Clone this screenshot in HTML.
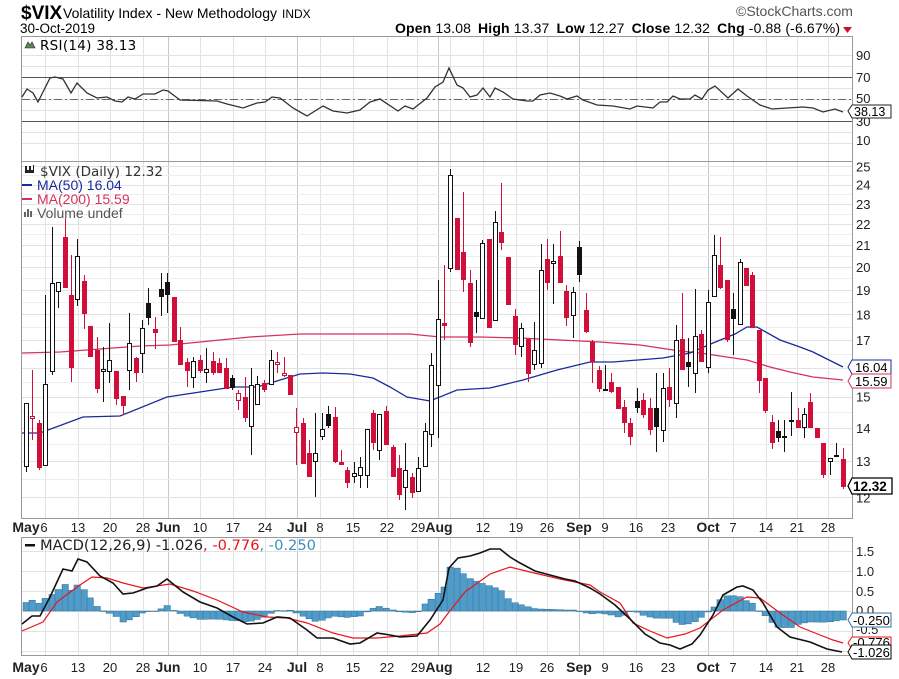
<!DOCTYPE html>
<html><head><meta charset="utf-8"><style>
html,body{margin:0;padding:0;background:#fff;width:899px;height:679px;overflow:hidden}
svg{display:block;font-family:"Liberation Sans",sans-serif}
</style></head><body>
<svg id="s" width="899" height="679" viewBox="0 0 899 679" xmlns="http://www.w3.org/2000/svg">
<g id="grid" stroke="#e2e2e2" stroke-width="1" shape-rendering="crispEdges"></g>
<!-- header -->
<text x="21" y="19" font-size="19" font-weight="bold">$VIX</text>
<text x="63" y="18" font-size="14">Volatility Index - New Methodology</text>
<text x="282" y="18" font-size="12">INDX</text>
<text x="20" y="33" font-size="13.5">30-Oct-2019</text>
<text x="736" y="16" font-size="14" fill="#555">©StockCharts.com</text>
<text x="395" y="33" font-size="14" textLength="445" lengthAdjust="spacing"><tspan font-weight="bold">Open</tspan> 13.08 <tspan font-weight="bold" dx="3">High</tspan> 13.37 <tspan font-weight="bold" dx="3">Low</tspan> 12.27 <tspan font-weight="bold" dx="3">Close</tspan> 12.32 <tspan font-weight="bold" dx="3">Chg</tspan> -0.88 (-6.67%)</text>
<polygon points="843,27 852,27 847.5,33" fill="#c8102e"/>
<!-- panel borders -->
<g fill="none" stroke="#999" stroke-width="1" shape-rendering="crispEdges">
<rect x="21.5" y="36.5" width="831" height="125"/>
<rect x="21.5" y="161.5" width="831" height="357"/>
<rect x="21.5" y="537.5" width="831" height="118"/>
</g>
<!-- RSI -->
<g shape-rendering="crispEdges" stroke-width="1">
<line x1="22" y1="77.5" x2="852" y2="77.5" stroke="#555"/>
<line x1="22" y1="121.5" x2="852" y2="121.5" stroke="#555"/>
<line x1="22" y1="99.5" x2="852" y2="99.5" stroke="#666" stroke-dasharray="8,3,2,3"/>
</g>
<polyline fill="none" stroke="#333" stroke-width="1.3" points="22,97 27,89 33,93 38,102 50,78 55,77 63,79 71,93 77,83 87,93 97,98 107,97 115,101 122,102 128,97 135,99 143,94 155,94 163,90 168,91 180,100 217,101 227,104 243,108 257,103 265,102 272,97 280,98 293,108 307,116 323,106 333,111 347,113 360,110 370,102 380,99 398,111 405,106 413,109 427,98 435,87 443,82 449,68 457,85 463,88 470,97 477,95 483,88 490,97 495,88 503,92 513,99 527,101 533,101 540,95 550,93 560,96 567,99 577,96 583,100 597,105 613,106 630,109 637,106 653,108 660,102 667,102 673,96 680,99 690,99 695,95 702,99 708,90 715,86 728,98 738,89 747,96 760,105 772,109 787,108 803,107 813,108 823,112 835,109 843,112"/>
<polygon points="25,48 28,42 30,45 32,42 35,48" fill="#5a8a5a" stroke="#222" stroke-width=".6"/>
<text x="40" y="50" font-size="13.5" font-family="DejaVu Sans,sans-serif" letter-spacing=".3">RSI(14) 38.13</text>
<g font-size="13" fill="#222">
<text x="856" y="60">90</text><text x="856" y="82">70</text><text x="856" y="103">50</text><text x="856" y="126">30</text><text x="856" y="145">10</text>
</g>
<path d="M848,111 L852,105 H891 V118 H852 Z" fill="#fff" stroke="#222"/>
<text x="854" y="116" font-size="12.5">38.13</text>
<!-- price -->
<polyline fill="none" stroke="#d4335a" stroke-width="1.3" points="22,353 60,352 100,349 140,346 170,345 200,342 250,337 300,334 360,334 410,334 440,337 480,337 520,338 560,340 600,342 640,345 680,351 700,353 720,356 747,360 770,367 790,372 813,377 843,380"/>
<polyline fill="none" stroke="#1a2a9a" stroke-width="1.3" points="22,433 40,433 83,417 120,416 167,397 200,392 233,387 257,387 300,374 323,373 350,374 373,378 390,387 407,397 430,401 457,390 490,388 523,380 557,370 590,362 613,362 663,358 690,353 713,343 735,334 747,327 757,327 780,340 800,347 813,352 843,367"/>
<g id="candles"></g>
<g font-size="13.5" fill="#333" font-family="DejaVu Sans,sans-serif">
<path d="M25,166 h2 v4 h2 v-4 h2 v4 h2 v-5 h1 v8 h-9z" fill="#222"/>
<text x="40" y="176">$VIX (Daily) 12.32</text>
<rect x="22" y="184" width="10" height="2" fill="#1a2a9a"/><text x="37" y="190" fill="#1a2a9a" font-family="Liberation Sans,sans-serif" font-size="14">MA(50) 16.04</text>
<rect x="22" y="198" width="10" height="2" fill="#d4335a"/><text x="37" y="204" fill="#d4335a" font-family="Liberation Sans,sans-serif" font-size="14">MA(200) 15.59</text>
<path d="M24,217 v-5 h2 v5 M27,217 v-8 h2 v8 M30,217 v-6 h2 v6" fill="#666"/><text x="37" y="218" fill="#555" font-family="Liberation Sans,sans-serif" font-size="14">Volume undef</text>
</g>
<g font-size="13" fill="#222" id="paxis"></g>
<path d="M848,367 L852,360 H891 V374 H852 Z" fill="#fff" stroke="#1a2a9a"/>
<text x="855" y="372" font-size="13">16.04</text>
<path d="M848,381 L852,374 H891 V388 H852 Z" fill="#fff" stroke="#d4335a"/>
<text x="855" y="386" font-size="13">15.59</text>
<path d="M848,486 L852,478 H892 V494 H852 Z" fill="#fff" stroke="#000" stroke-width="1.3"/>
<text x="853" y="491" font-size="13.5" font-weight="bold">12.32</text>
<!-- date axes -->
<g id="dates" font-size="13" fill="#222"></g>
<!-- MACD -->
<g id="hist"></g>
<polyline fill="none" stroke="#e8141e" stroke-width="1.2" points="22,631 43,622 57,602 77,587 92,577 107,578 123,583 143,588 170,584 193,591 217,600 243,612 267,617 287,618 307,623 333,633 353,638 377,638 400,636 427,633 440,624 449,612 465,592 490,574 510,567 530,572 560,579 590,585 600,592 620,603 633,623 650,631 667,638 685,634 700,628 723,610 747,597 760,598 780,613 800,627 820,635 833,640 843,643"/>
<polyline fill="none" stroke="#111" stroke-width="1.6" points="22,624 32,616 40,616 50,597 63,569 72,571 78,559 87,562 100,576 113,583 123,594 133,593 147,588 157,586 167,579 183,592 200,602 217,608 233,617 247,624 263,623 277,617 290,618 307,630 317,638 333,638 350,644 360,643 377,633 390,635 400,637 417,636 430,620 443,600 449,568 458,558 470,556 480,553 490,549 500,549 510,557 520,563 535,571 550,575 565,579 575,581 590,588 600,594 615,605 630,619 645,634 660,643 670,645 680,649 692,644 700,635 713,615 723,595 737,587 743,586 753,590 763,603 777,627 790,637 810,642 827,649 842,652"/>
<rect x="25" y="544" width="10" height="2.5" fill="#111"/>
<text x="40" y="550" font-size="14" font-family="DejaVu Sans,sans-serif" fill="#222" textLength="276" lengthAdjust="spacingAndGlyphs">MACD(12,26,9) -1.026<tspan fill="#e8141e">, -0.776</tspan><tspan fill="#3a8fc0">, -0.250</tspan></text>
<g font-size="13" fill="#222">
<text x="856" y="556">1.5</text><text x="856" y="576">1.0</text><text x="856" y="596">0.5</text><text x="856" y="615">0.0</text><text x="856" y="634">-0.5</text>
</g>
<path d="M848,643 L852,637 H891 V649 H852 Z" fill="#fff" stroke="#e8141e"/>
<text x="853" y="647" font-size="13">-0.776</text>
<path d="M848,620 L852,613 H891 V627 H852 Z" fill="#fff" stroke="#3a6fa0"/>
<text x="853" y="625" font-size="13">-0.250</text>
<path d="M848,652 L852,645 H891 V659 H852 Z" fill="#fff" stroke="#000"/>
<text x="853" y="657" font-size="13">-1.026</text>
</svg>
<script>
(function(){
var NS="http://www.w3.org/2000/svg";
function el(p,t,a,txt){var e=document.createElementNS(NS,t);for(var k in a)e.setAttribute(k,a[k]);if(txt!==undefined)e.textContent=txt;p.appendChild(e);return e;}
var g=document.getElementById('grid');
var wk=[45,78,110,143,168,200,233,265,297,320,353,387,417,438,450,483,516,547,579,603,636,668,708,733,766,797,828];
wk.forEach(function(x){
 el(g,'line',{x1:x+.5,y1:37,x2:x+.5,y2:161});
 el(g,'line',{x1:x+.5,y1:162,x2:x+.5,y2:518});
 el(g,'line',{x1:x+.5,y1:538,x2:x+.5,y2:655});
});
[168,297,438,579,708].forEach(function(x){
 [[37,161],[162,518],[538,655]].forEach(function(r){el(g,'line',{x1:x+.5,y1:r[0],x2:x+.5,y2:r[1],stroke:'#c8c8c8'});});
});
for(var v=10;v<=90;v+=10){var y=Math.round(99-(v-50)*1.1)+.5;el(g,'line',{x1:22,y1:y,x2:852,y2:y});}
var pa=document.getElementById('paxis');
for(var p=12;p<=25;p++){var y=1618-451*Math.log(p);el(g,'line',{x1:22,y1:Math.round(y)+.5,x2:852,y2:Math.round(y)+.5});
 if(p!=16)el(pa,'text',{x:856,y:y+5},String(p));
 if(p<25){var y2=1618-451*Math.log(p+.5);el(g,'line',{x1:22,y1:Math.round(y2)+.5,x2:852,y2:Math.round(y2)+.5,stroke:'#eeeeee'});}
}
[-1,-0.5,0,0.5,1,1.5].forEach(function(v){var y=Math.round(611-v*40)+.5;el(g,'line',{x1:22,y1:y,x2:852,y2:y});});
var C=[[26,403,472,403,467,'h'],[32,370,440,416,419,'o'],[39,420,470,423,468,'r'],[45,295,466,384,466,'h'],[52,227,375,283,372,'h'],[58,282,308,282,292,'h'],[65,218,288,237,288,'r'],[71,255,382,295,368,'r'],[77,239,306,256,300,'h'],[84,275,329,281,314,'r'],[90,326,357,326,357,'r'],[97,337,393,350,389,'r'],[103,347,402,369,372,'h'],[109,323,383,360,372,'h'],[116,371,405,371,399,'r'],[123,396,415,396,406,'r'],[129,313,390,343,371,'h'],[136,357,382,358,373,'r'],[142,320,373,328,354,'h'],[148,288,325,303,318,'b'],[155,317,349,329,333,'r'],[161,273,316,289,297,'b'],[167,273,313,282,295,'b'],[174,297,342,297,342,'r'],[180,327,365,340,365,'r'],[187,358,387,362,371,'r'],[193,357,388,361,378,'h'],[200,355,373,360,371,'r'],[206,348,383,369,373,'h'],[213,352,375,361,373,'r'],[219,358,373,363,373,'r'],[226,358,389,368,389,'r'],[232,375,390,378,388,'b'],[238,390,410,393,401,'o'],[245,377,422,397,418,'r'],[251,368,455,385,427,'h'],[257,376,405,384,405,'h'],[264,380,392,383,390,'r'],[271,350,385,360,385,'h'],[277,352,373,362,365,'o'],[284,357,377,373,376,'o'],[290,375,395,375,395,'r'],[296,408,465,427,433,'o'],[303,418,464,423,464,'r'],[309,440,477,453,477,'r'],[315,413,497,453,462,'h'],[322,413,440,429,437,'h'],[328,406,428,414,426,'b'],[335,407,463,417,462,'r'],[341,450,465,462,465,'r'],[347,467,488,470,483,'r'],[354,462,483,473,477,'h'],[360,457,488,467,476,'h'],[367,429,488,429,476,'h'],[373,410,450,413,443,'r'],[379,414,460,414,451,'h'],[386,406,445,411,445,'r'],[393,445,477,447,477,'r'],[399,455,500,468,495,'r'],[405,443,510,470,488,'h'],[412,473,498,477,493,'r'],[418,457,492,468,492,'h'],[425,423,467,431,467,'h'],[431,353,447,365,435,'h'],[438,280,438,319,386,'h'],[444,265,340,323,326,'r'],[450,169,272,175,269,'h'],[457,218,270,218,270,'r'],[463,192,292,252,280,'r'],[470,270,347,283,343,'r'],[476,280,333,312,317,'b'],[482,240,319,243,319,'h'],[489,239,328,239,328,'r'],[495,211,321,222,321,'h'],[501,183,250,232,243,'r'],[508,257,305,257,305,'r'],[515,309,355,316,345,'r'],[521,323,357,328,347,'h'],[528,339,382,339,374,'r'],[534,322,370,350,365,'h'],[541,244,368,270,364,'h'],[547,239,290,259,283,'r'],[553,244,304,261,264,'h'],[560,231,283,256,283,'r'],[566,285,326,291,318,'r'],[573,287,338,292,316,'h'],[579,241,282,247,275,'b'],[586,293,333,310,332,'r'],[592,340,383,342,362,'r'],[599,366,392,370,389,'r'],[605,365,390,389,390,'h'],[611,373,393,382,392,'r'],[618,387,409,387,409,'r'],[624,400,433,407,423,'r'],[630,418,445,423,437,'r'],[637,388,413,401,408,'b'],[643,393,418,400,415,'r'],[650,398,435,408,430,'r'],[656,373,452,408,427,'b'],[663,373,442,388,431,'h'],[669,368,407,387,400,'r'],[676,325,418,340,404,'h'],[682,293,370,339,370,'r'],[688,338,387,362,367,'b'],[695,289,393,336,374,'h'],[701,330,362,334,362,'r'],[708,290,373,302,368,'h'],[714,235,297,255,297,'h'],[720,237,289,265,288,'r'],[727,280,342,280,340,'r'],[733,293,355,309,319,'b'],[740,259,325,262,325,'h'],[746,268,286,268,286,'r'],[752,272,328,275,328,'r'],[759,330,393,330,381,'r'],[765,378,413,378,411,'r'],[772,415,449,422,443,'r'],[778,420,442,431,438,'b'],[784,420,452,436,437,'h'],[791,392,436,420,421,'h'],[798,408,428,420,428,'r'],[804,408,438,414,428,'h'],[810,393,428,402,428,'r'],[817,428,438,428,438,'r'],[823,443,478,443,475,'r'],[830,458,475,458,462,'h'],[836,443,457,455,456,'h'],[843,448,489,459,487,'r']];
var cg=document.getElementById('candles');var RED='#d0103a';
C.forEach(function(c){var col=(c[5]=='r'||c[5]=='o')?RED:'#111';
 el(cg,'line',{x1:c[0]+.5,y1:c[1],x2:c[0]+.5,y2:c[2],stroke:col,'stroke-width':1});
 var h=Math.max(1,c[4]-c[3]);
 if(c[5]=='r'||c[5]=='b')el(cg,'rect',{x:c[0]-2,y:c[3],width:5,height:h,fill:col});
 else el(cg,'rect',{x:c[0]-1.5,y:c[3]+.5,width:4,height:Math.max(1,h-1),fill:'#fff',stroke:col,'stroke-width':1});
});
var pls=document.querySelectorAll('polyline');
function pts(pl){return pl.getAttribute('points').trim().split(/\s+/).map(function(s){var a=s.split(',');return [+a[0],+a[1]];});}
var sig=pts(pls[pls.length-2]),mac=pts(pls[pls.length-1]);
function interp(a,x){for(var i=1;i<a.length;i++){if(a[i][0]>=x){var t=(x-a[i-1][0])/(a[i][0]-a[i-1][0]||1);return a[i-1][1]+t*(a[i][1]-a[i-1][1]);}}return a[a.length-1][1];}
var hg=document.getElementById('hist');
for(var i=0;i<C.length;i++){var x=C[i][0];var h=interp(sig,x)-interp(mac,x);
 var y=h>0?611-h:611;el(hg,'rect',{x:x-3,y:y,width:6.4,height:Math.max(.5,Math.abs(h)),fill:'#4f9ccb',stroke:'#2d6e95','stroke-width':.5});}
var dg=document.getElementById('dates');
var L=[[26,'May',1],[44,'6'],[78,'13'],[110,'20'],[143,'28'],[168,'Jun',1],[200,'10'],[233,'17'],[265,'24'],[297,'Jul',1],[320,'8'],[353,'15'],[387,'22'],[418,'29'],[439,'Aug',1],[483,'12'],[516,'19'],[547,'26'],[579,'Sep',1],[605,'9'],[636,'16'],[668,'23'],[708,'Oct',1],[733,'7'],[766,'14'],[797,'21'],[828,'28']];
[532,672].forEach(function(yy){L.forEach(function(l){var a={x:l[0],y:yy,'text-anchor':'middle'};if(l[2]){a['font-weight']='bold';a['font-size']=14;}el(dg,'text',a,l[1]);});});
})();
</script>
</body></html>
